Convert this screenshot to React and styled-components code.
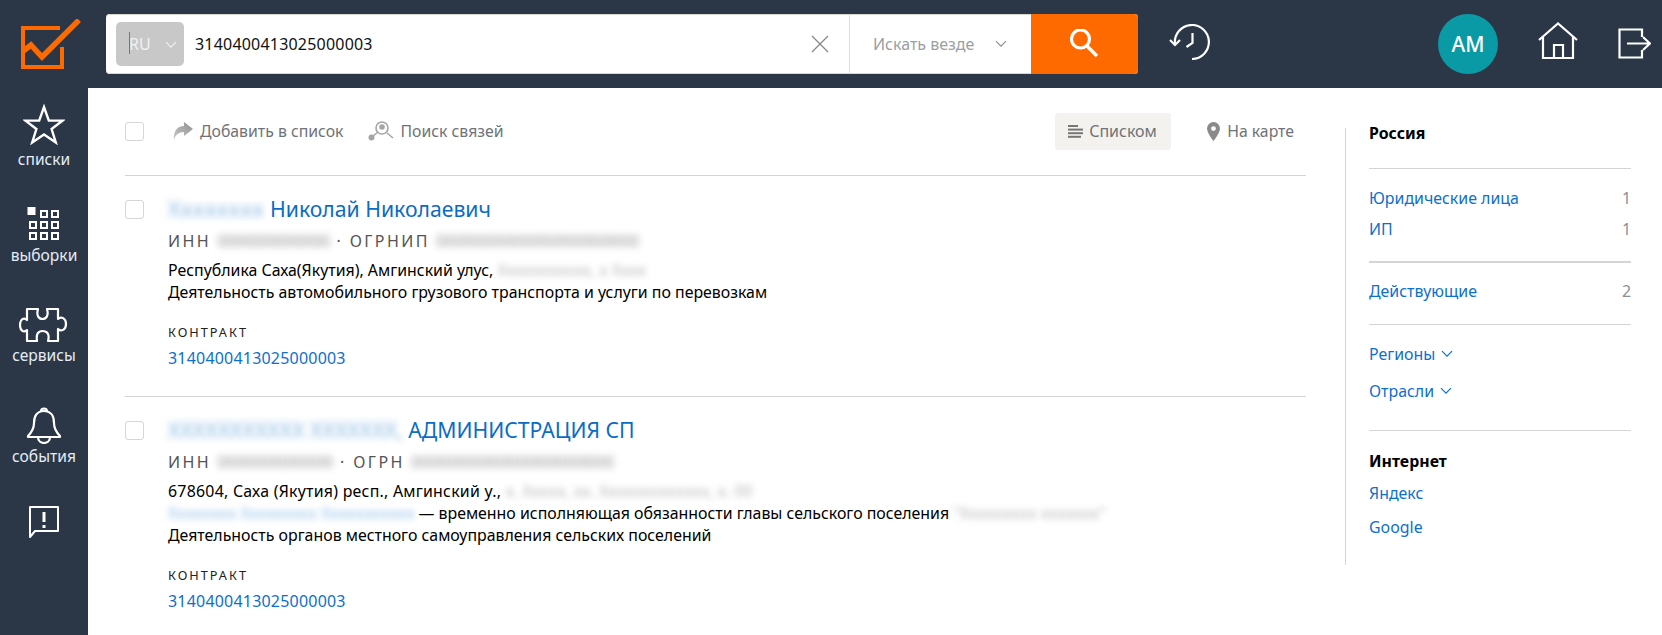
import React from "react";
import styled, { createGlobalStyle } from "styled-components";

const Global = createGlobalStyle`
  html, body { margin: 0; padding: 0; background: #fff; }
  body { font-family: "Noto Sans", "Open Sans", sans-serif; color: #000; overflow: hidden; }
  * { box-sizing: border-box; }
`;

const Page = styled.div`
  width: 1662px; height: 635px; overflow: hidden;
  display: grid; grid-template-columns: 88px 1fr; grid-template-rows: 88px 1fr;
  background: #fff;
`;
const Header = styled.header`
  grid-column: 1 / 3; background: #2b3647; display: flex; align-items: center; padding-left: 21px;
`;
const LogoBox = styled.div`width: 61px; height: 50px; margin-right: 24px; display: flex;`;
const Search = styled.div`
  width: 1032px; height: 60px; display: flex; align-items: center; background: #fff;
  border-radius: 4px; overflow: hidden; box-shadow: inset 0 1px 0 #d8d8d0, inset 0 -1px 0 #d8d8d0;
`;
const Lang = styled.div`
  width: 68px; height: 44px; margin-left: 10px; border-radius: 5px; background: #c8c8c8; color: #f1f1f1;
  display: flex; align-items: center; padding-left: 13px; font-size: 16px; position: relative;
  svg { position: absolute; left: 49px; top: 19px; }
`;
const Caret = styled.span`position: absolute; left: 13px; top: 10px; width: 1px; height: 22px; background: #777;`;
const Query = styled.div`margin-left: 11px; font-size: 16px; letter-spacing: .2px; flex: 1; color: #111;`;
const Clear = styled.div`width: 18px; height: 18px; margin-right: 20px; display: flex;`;
const Scope = styled.div`
  width: 182px; height: 100%; border-left: 1px solid #ddd; display: flex; align-items: center;
  padding-left: 23px; color: #9a9fa6; font-size: 16px; gap: 21px;
`;
const Go = styled.div`width: 107px; height: 60px; background: #ff6a00; display: flex; align-items: center; justify-content: center;`;
const History = styled.div`margin-left: 30px; width: 44px; height: 40px; display: flex;`;
const Right = styled.div`margin-left: auto; display: flex; align-items: center; padding-right: 11px;`;
const Avatar = styled.div`
  width: 60px; height: 60px; border-radius: 50%; background: #0a9aa6; color: #fff;
  display: flex; align-items: center; justify-content: center; font-size: 21px; font-weight: 500; margin-right: 40px;
`;
const HeadIcon = styled.div`display: flex; margin-right: ${p => p.$mr || 0}px; margin-bottom: ${p => p.$mb || 0}px;`;

const Side = styled.nav`background: #2b3647; display: flex; flex-direction: column; align-items: center; padding-top: 15px;`;
const SideItem = styled.div`
  width: 88px; height: ${p => p.$h}px; display: flex; flex-direction: column; align-items: center;
  color: #e4edf5; font-size: 15.6px; line-height: 20px;
  svg { display: block; margin-bottom: ${p => p.$gap}px; }
`;

const Main = styled.main`display: flex; min-width: 0; padding-left: 37px;`;
const Results = styled.section`width: 1181px; flex: none;`;
const Toolbar = styled.div`
  height: 88px; border-bottom: 1px solid #d4d4d0; display: flex; align-items: center; padding-bottom: 1px;
  color: #6f7378; font-size: 15.8px;
`;
const Check = styled.span`
  width: 19px; height: 19px; flex: none; border: 1px solid #d6d6d2; border-radius: 3px; background: #fff; display: block;
`;
const Tool = styled.div`display: flex; align-items: center; margin-left: ${p => p.$ml}px; gap: ${p => p.$gap}px;`;
const Spacer = styled.span`width: 12px; flex: none;`;
const ListBtn = styled.div`
  margin-left: auto; width: 116px; height: 37px; background: #f3f2ef; border-radius: 3px;
  display: flex; align-items: center; gap: 6px; padding-left: 13px; font-size: 16px;
`;
const Row = styled.article`
  display: flex; padding: 20px 0 28px; border-bottom: ${p => (p.$last ? "none" : "1px solid #d4d4d0")};
`;
const RowCheck = styled.div`width: 43px; flex: none; padding-top: 4px;`;
const Name = styled.div`font-size: 21.2px; line-height: 26px; color: #0b6cc4; white-space: nowrap;`;
const Blur = styled.span`
  filter: blur(${p => p.$r || 3}px); color: ${p => p.$c || "inherit"}; opacity: ${p => p.$o || 1};
  letter-spacing: ${p => p.$ls ?? "normal"};
`;
const Ids = styled.div`margin-top: 8px; font-size: 16px; line-height: 22px; letter-spacing: 2.4px; color: #555; white-space: nowrap;`;
const Lines = styled.div`margin-top: 7px; font-size: 15.9px; line-height: 22px; white-space: nowrap; color: #000;`;
const Spaced = styled.div`letter-spacing: .25px;`;
const Caption = styled.div`margin-top: 19px; font-size: 12.7px; line-height: 20px; letter-spacing: 2px; color: #222;`;
const Num = styled.div`margin-top: 6px; font-size: 16px; letter-spacing: .2px; line-height: 20px; color: #0d70cc;`;

const Aside = styled.aside`
  margin-left: 39px; margin-top: 40px; height: 437px; width: 286px; border-left: 1px solid #d4d4d0; padding-left: 23px;
  font-size: 15.9px; line-height: 20px; color: #0d70cc;
`;
const Title = styled.div`font-weight: 700; color: #000; line-height: 10px; margin-top: ${p => p.$mt || 0}px;`;
const Rule = styled.div`height: ${p => p.$h || 1}px; background: #d4d4d0; margin-top: ${p => p.$mt}px;`;
const Facet = styled.div`display: flex; justify-content: space-between; margin-top: ${p => p.$mt}px;`;
const Count = styled.span`color: #8a8f96;`;
const Drop = styled.div`display: flex; align-items: center; gap: 6px; margin-top: ${p => p.$mt}px;`;

const Chev = ({ w = 12, c = "#fff", sw = 1.2 }) => (
  <svg width={w} height={w * 0.6} viewBox="0 0 12 7" fill="none" stroke={c} strokeWidth={sw}><path d="M1 1l5 5 5-5" /></svg>
);

const Logo = () => (
  <svg width="61" height="50" viewBox="0 0 61 50" fill="none" stroke="#ff6a00">
    <path d="M39 9H2v39h39V28" strokeWidth="4" />
    <path d="M1 33L10 26 21 38 58 1" strokeWidth="5.5" />
  </svg>
);

const Star = () => (
  <svg width="42" height="42" viewBox="0 0 42 42" fill="none" stroke="#fff" strokeWidth="2.4">
    <path d="M21 4l4.8 13.6H39.5L28.6 26l4.2 13.5L21 31.5 9.2 39.5 13.4 26 2.5 17.6h13.7z" />
  </svg>
);
const Grid = () => (
  <svg width="34" height="34" viewBox="0 0 34 34" fill="none" stroke="#fff" strokeWidth="2">
    <rect x="0.5" y="0" width="8" height="8" fill="#fff" stroke="none" />
    {[[13, 3], [24, 3], [2, 14], [13, 14], [24, 14], [2, 25], [13, 25], [24, 25]].map(([x, y]) => (
      <rect key={x + "-" + y} x={x + 1} y={y + 1} width="6" height="6" />
    ))}
  </svg>
);
const Puzzle = () => (
  <svg width="50" height="36" viewBox="0 0 50 36" fill="none" stroke="#fff" strokeWidth="2.2" strokeLinejoin="round">
    <path d="M8 2H19C17 9 20 12 23.5 12S30 9 28 2H39V12C42 9 47 11 47 17S42 25 39 22V34H29C31 27 28 24 23.5 24S17 27 18 34H8V23C5 26 1 24 1 18S5 10 8 13Z" />
  </svg>
);
const Bell = () => (
  <svg width="36" height="38" viewBox="0 0 36 38" fill="none" stroke="#fff" strokeWidth="2.2" strokeLinejoin="round">
    <path d="M15 5.5a3 3 0 1 1 6 0" />
    <path d="M18 5c-7 0-10 5-10 12 0 5-2 9-6 13v1h32v-1c-4-4-6-8-6-13 0-7-3-12-10-12z" />
    <path d="M12 31c0 4 3 6 6 6s6-2 6-6" />
  </svg>
);
const Alert = () => (
  <svg width="32" height="34" viewBox="0 0 32 34" fill="none" stroke="#fff" strokeWidth="2">
    <path d="M2 2h28v24H7l-5 6z" strokeLinejoin="round" />
    <path d="M16 7v10M16 20v3" strokeWidth="3" />
  </svg>
);

const Share = () => (
  <svg width="22" height="20" viewBox="0 0 22 20">
    <defs><linearGradient id="shareFill" x1="0" y1="1" x2="1" y2="0"><stop offset="0" stopColor="#c9c9c9" /><stop offset="1" stopColor="#8f8f8f" /></linearGradient></defs>
    <path fill="url(#shareFill)" d="M12 1l9 7-9 7v-4C7 11 3 14 2 19 1 11 5 5 12 5z" />
  </svg>
);
const Links = () => (
  <svg width="26" height="22" viewBox="0 0 26 22" fill="none" stroke="#a5a5a5" strokeWidth="1.6">
    <circle cx="14" cy="8" r="6" /><circle cx="14" cy="7" r="2.8" fill="#a5a5a5" stroke="none" />
    <path d="M4 17l6-5M19 13l6 5" /><circle cx="3.500" cy="17.5" r="3" fill="#a5a5a5" stroke="none" />
  </svg>
);
const ListIcon = () => (
  <svg width="15" height="13" viewBox="0 0 15 13" fill="#777"><rect width="10" height="2" /><rect y="3.6" width="15" height="2" /><rect y="7.2" width="15" height="2" /><rect y="10.8" width="13" height="2" /></svg>
);
const Pin = () => (
  <svg width="13" height="19" viewBox="0 0 13 19" fill="#8a8a8a"><path fillRule="evenodd" d="M6.5 0A6.5 6.5 0 0 0 0 6.5C0 11 6.5 19 6.5 19S13 11 13 6.5A6.5 6.5 0 0 0 6.5 0zm0 9a2.4 2.4 0 1 1 0-4.8 2.4 2.4 0 0 1 0 4.8z" /></svg>
);

function Result({ last, blurName, lsName, name, idA, lsA = ".5px", labelB, idB, children }) {
  return (
    <Row $last={last}>
      <RowCheck><Check /></RowCheck>
      <div>
        <Name><Blur $r={3.5} $o={0.5} $ls={lsName}>{blurName}</Blur> {name}</Name>
        <Ids>ИНН <Blur $r={3.5} $c="#666" $o={0.75} $ls={lsA}>{idA}</Blur> · {labelB} <Blur $r={3.5} $c="#666" $o={0.75} $ls=".5px">{idB}</Blur></Ids>
        <Lines>{children}</Lines>
        <Caption>КОНТРАКТ</Caption>
        <Num>3140400413025000003</Num>
      </div>
    </Row>
  );
}

export default function App() {
  return (
    <Page>
      <Global />
      <Header>
        <LogoBox><Logo /></LogoBox>
        <Search>
          <Lang><Caret />RU<Chev c="#f1f1f1" /></Lang>
          <Query>3140400413025000003</Query>
          <Clear>
            <svg width="18" height="18" viewBox="0 0 18 18" stroke="#888" strokeWidth="1.3"><path d="M1 1l16 16M17 1L1 17" /></svg>
          </Clear>
          <Scope>Искать везде<Chev c="#8a8f96" /></Scope>
          <Go>
            <svg width="30" height="30" viewBox="0 0 30 30" fill="none" stroke="#fff"><circle cx="10.500" cy="10" r="9" strokeWidth="3.2" /><path d="M17 17l10 10" strokeWidth="3.6" /></svg>
          </Go>
        </Search>
        <History>
          <svg width="44" height="40" viewBox="0 0 44 40" fill="none" stroke="#fff" strokeWidth="2.2">
            <path d="M7 20A17 17 0 1 1 24 35" />
            <path d="M2 16l5 5 5-5" /><path d="M24.500 9v10l-6 4" />
          </svg>
        </History>
        <Right>
          <Avatar>АМ</Avatar>
          <HeadIcon $mr={40} $mb={7}>
            <svg width="40" height="37" viewBox="0 0 40 37" fill="none" stroke="#fff" strokeWidth="2.2">
              <path d="M1 18L20 1.500l19 16.500" /><path d="M5 15v21h30V15" /><path d="M16 36V23h9v13" />
            </svg>
          </HeadIcon>
          <HeadIcon $mb={2}>
            <svg width="33" height="31" viewBox="0 0 33 31" fill="none" stroke="#fff" strokeWidth="2.2">
              <path d="M24 9V1.500H1.500v28H24V22" /><path d="M9 15.500h23M25 9l7 6.500-7 6.500" />
            </svg>
          </HeadIcon>
        </Right>
      </Header>

      <Side>
        <SideItem $h={104} $gap={4}><Star />списки</SideItem>
        <SideItem $h={100} $gap={4}><Grid />выборки</SideItem>
        <SideItem $h={99} $gap={2}><Puzzle />сервисы</SideItem>
        <SideItem $h={99} $gap={2}><Bell />события</SideItem>
        <SideItem $h={50} $gap={0}><Alert /></SideItem>
      </Side>

      <Main>
        <Results>
          <Toolbar>
            <Check />
            <Tool $ml={28} $gap={6}><Share />Добавить в список</Tool>
            <Tool $ml={25} $gap={6}><Links />Поиск связей</Tool>
            <ListBtn><ListIcon />Списком</ListBtn>
            <Tool $ml={36} $gap={7}><Pin />На карте</Tool>
            <Spacer />
          </Toolbar>
          <Result blurName="Xxxxxxxx" lsName=".7px" name="Николай Николаевич" idA="000000000000" lsA=".2px" labelB="ОГРНИП" idB="000000000000000000000">
            <div>Республика Саха(Якутия), Амгинский улус, <Blur $c="#888" $o={0.6}>Xxxxxxxxxxx, x Xxxx</Blur></div>
            <div>Деятельность автомобильного грузового транспорта и услуги по перевозкам</div>
          </Result>
          <Result last blurName="XXXXXXXXXXX XXXXXXX," name="АДМИНИСТРАЦИЯ СП" idA="000000000000" labelB="ОГРН" idB="000000000000000000000">
            <Spaced>678604, Саха (Якутия) респ., Амгинский у., <Blur $c="#888" $o={0.6}>x. Xxxxx, xx. Xxxxxxxxxxxxx, x. 00</Blur></Spaced>
            <div><Blur $c="#0d70cc" $o={0.45}>Xxxxxxxx Xxxxxxxxx Xxxxxxxxxxx</Blur> — временно исполняющая обязанности главы сельского поселения <Blur $c="#888" $o={0.6}>"Xxxxxxxxx xxxxxxx"</Blur></div>
            <div>Деятельность органов местного самоуправления сельских поселений</div>
          </Result>
        </Results>
        <Aside>
          <Title>Россия</Title>
          <Rule $mt={30} />
          <Facet $mt={19}>Юридические лица<Count>1</Count></Facet>
          <Facet $mt={11}>ИП<Count>1</Count></Facet>
          <Rule $h={2} $mt={22} />
          <Facet $mt={18}>Действующие<Count>2</Count></Facet>
          <Rule $mt={23} />
          <Drop $mt={19}>Регионы<Chev c="#0d70cc" /></Drop>
          <Drop $mt={17}>Отрасли<Chev c="#0d70cc" /></Drop>
          <Rule $mt={29} />
          <Title $mt={25}>Интернет</Title>
          <Facet $mt={17}>Яндекс</Facet>
          <Facet $mt={14}>Google</Facet>
        </Aside>
      </Main>
    </Page>
  );
}
